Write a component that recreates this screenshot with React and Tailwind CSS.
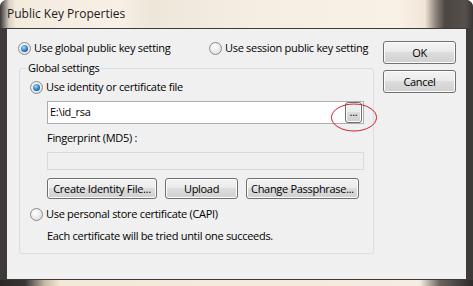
import React from 'react';

const Radio = ({ checked }) => (
  <span className="w-[13px] h-[13px] shrink-0 rounded-full border border-[#8a8a8a] bg-[radial-gradient(circle_at_40%_35%,#ffffff,#d8d8d8)] flex items-center justify-center">
    {checked && (
      <span className="w-[7px] h-[7px] rounded-full bg-[radial-gradient(circle_at_40%_35%,#a6dcf8,#2a7bc4_55%,#0c3468)]" />
    )}
  </span>
);

const Button = ({ children, className = '' }) => (
  <button
    className={`h-[21px] border border-[#707070] rounded-[3px] bg-[linear-gradient(#f3f3f3,#ebebeb_45%,#dddddd_50%,#d0d0d0)] leading-none text-black whitespace-nowrap flex items-center justify-center shadow-[inset_0_0_0_1px_#fcfcfc] ${className}`}
  >
    {children}
  </button>
);

export default function App() {
  return (
    <div className="relative w-[473px] h-[286px] overflow-hidden rounded-t-[7px] bg-[#3e3a3a] font-['Open_Sans',sans-serif] text-[11px] tracking-[-0.3px] text-black whitespace-nowrap flex flex-col">
      {/* title bar */}
      <div className="h-[28px] shrink-0 flex items-center pl-[7px] bg-[linear-gradient(90deg,#3a3636_0px,#6d6762_3px,#d9cfc3_9px,#f4ebdf_16px,#f8f0e5_120px,#efe6da_150px,#f6eee3_260px,#f9f1e6_400px,#f0e5d7_425px,#8b8178_436px,#4c4642_445px,#55504c_465px,#3a3636_473px)]">
        <span className="text-[12px] tracking-[0px] text-[#1a1a1a]">Public Key Properties</span>
      </div>

      {/* client area */}
      <div className="mx-[6px] h-[252px] shrink-0 border border-[#3c3c3c] bg-[#f0f0f0] flex pt-[12px] pl-[12px]">
        <div className="w-[355px] flex flex-col">
          <div className="flex items-center h-[13px] mt-[1px]">
            <div className="w-[191px] flex items-center gap-[3px] -ml-[1px]">
              <Radio checked />
              <span>Use global public key setting</span>
            </div>
            <div className="flex items-center gap-[3px]">
              <Radio />
              <span>Use session public key setting</span>
            </div>
          </div>

          <div className="relative mt-[13px] h-[186px] border border-[#d5dfe5] rounded-[3px] pl-[10px] pr-[9px]">
            <span className="absolute -top-[9px] left-[6px] px-[2px] bg-[#f0f0f0] leading-[16px]">Global settings</span>

            <div className="flex items-center gap-[3px] mt-[12px] h-[13px]">
              <Radio checked />
              <span>Use identity or certificate file</span>
            </div>

            <div className="ml-[17px] mt-[7px] h-[23px] border border-[#abadb3] bg-white flex items-center justify-between pl-[2px] pr-[1px]">
              <span>E:\id_rsa</span>
              <Button className="w-[17px] h-[20px] pb-[3px] text-[11px]">...</Button>
            </div>

            <div className="ml-[17px] mt-[6px] leading-[16px]">Fingerprint (MD5) :</div>

            <div className="ml-[17px] mt-[6px] h-[18px] border border-[#d9d9d9] bg-[#f0f0f0]" />

            <div className="ml-[17px] mt-[8px] flex gap-[8px]">
              <Button className="w-[110px]">Create Identity File...</Button>
              <Button className="w-[73px]">Upload</Button>
              <Button className="w-[113px]">Change Passphrase...</Button>
            </div>

            <div className="flex items-center gap-[3px] mt-[9px] h-[13px]">
              <Radio />
              <span>Use personal store certificate (CAPI)</span>
            </div>

            <div className="ml-[17px] mt-[7px] leading-[16px]">Each certificate will be tried until one succeeds.</div>
          </div>
        </div>

        <div className="ml-[9px] flex flex-col gap-[6px]">
          <Button className="w-[73px] h-[23px]">OK</Button>
          <Button className="w-[73px] h-[23px]">Cancel</Button>
        </div>
      </div>

      {/* bottom frame */}
      <div className="flex-1 bg-[linear-gradient(90deg,#2c2828_0px,#3a3434_25px,#c9b9a6_45px,#f4e8d8_60px,#f6ecdf_420px,#6a625c_440px,#2e2a2a_473px)]" />

      {/* red annotation ellipse */}
      <svg className="absolute left-[330px] top-[102px]" width="48" height="31" viewBox="0 0 48 31">
        <ellipse cx="24" cy="15.5" rx="22.5" ry="13.5" fill="none" stroke="#c8202e" strokeWidth="1" />
      </svg>
    </div>
  );
}
